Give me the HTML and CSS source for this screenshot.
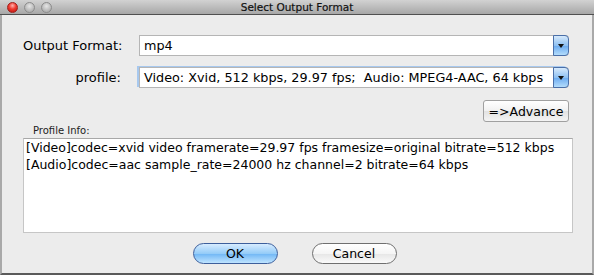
FILE: index.html
```html
<!DOCTYPE html>
<html lang="en">
<head>
    <meta charset="UTF-8">
    <title>Select Output Format</title>
    <link rel="stylesheet" href="styles.css">
</head>
<body>
    <div class="window">
        <div class="titlebar">
            <div class="lights">
                <span class="light close"></span>
                <span class="light"></span>
                <span class="light"></span>
            </div>
            <div class="title">Select Output Format</div>
        </div>

        <div class="content">
            <div class="row row-format">
                <label class="label">Output Format:</label>
                <div class="combo">
                    <span class="combo-text">mp4</span>
                    <span class="combo-arrow"></span>
                </div>
            </div>

            <div class="row row-profile">
                <label class="label">profile:</label>
                <div class="combo focus">
                    <span class="combo-text">Video: Xvid, 512 kbps, 29.97 fps;&nbsp; Audio: MPEG4-AAC, 64 kbps</span>
                    <span class="combo-arrow"></span>
                </div>
            </div>

            <div class="row row-advance">
                <button class="btn advance">=&gt;Advance</button>
            </div>

            <div class="info">
                <div class="info-label">Profile Info:</div>
                <div class="info-box">
                    <div>[Video]codec=xvid video framerate=29.97 fps framesize=original bitrate=512 kbps</div>
                    <div>[Audio]codec=aac sample_rate=24000 hz channel=2 bitrate=64 kbps</div>
                </div>
            </div>

            <div class="actions">
                <button class="btn pill ok">OK</button>
                <button class="btn pill">Cancel</button>
            </div>
        </div>
    </div>
</body>
</html>
```

FILE: styles.css
```css
body {
    margin: 0;
    padding: 0;
    background-color: #ececec;
    font-family: "DejaVu Sans", "Liberation Sans", sans-serif;
    color: #000;
}

.window {
    width: 594px;
    height: 275px;
    box-sizing: border-box;
    display: flex;
    flex-direction: column;
    background-color: #ececec;
    border-left: 2px solid #a9a9a9;
    border-right: 2px solid #a9a9a9;
    border-bottom: 2px solid #5a5a5a;
}

.titlebar {
    height: 14px;
    flex: none;
    display: flex;
    align-items: center;
    position: relative;
    margin: 0 -2px;
    background: linear-gradient(#d2d2d2, #a7a7a7);
    border-bottom: 1px solid #505050;
}

.lights {
    display: flex;
    gap: 6px;
    padding-left: 7px;
}

.light {
    width: 11px;
    height: 11px;
    border-radius: 50%;
    box-sizing: border-box;
    border: 1px solid #8c8c8c;
    background: radial-gradient(circle at 50% 35%, #e6e6e6, #b3b3b3 70%);
}

.light.close {
    border-color: #a0201c;
    background: radial-gradient(circle at 50% 30%, #ffb3b0 0, #f03a30 45%, #b8100a 100%);
}

.title {
    position: absolute;
    left: 0;
    right: 0;
    text-align: center;
    font-size: 10.5px;
    color: #111;
    -webkit-text-stroke: 0.2px #111;
}

.content {
    flex: 1;
    display: flex;
    flex-direction: column;
    padding: 20px 19px 0 21px;
}

.row {
    display: flex;
    align-items: center;
    margin-right: 4px;
}

.row-profile {
    margin-top: 11px;
}

.label {
    flex: none;
    width: 98px;
    text-align: right;
    white-space: nowrap;
    font-size: 13px;
    margin-right: 18px;
}

.combo {
    flex: 1;
    min-width: 0;
    height: 21px;
    box-sizing: border-box;
    display: flex;
    align-items: center;
    background-color: #fff;
    border: 1px solid #b5b5b5;
    border-right: none;
    border-radius: 0 4px 4px 0;
    font-size: 12.8px;
}

.combo.focus {
    box-shadow: -2px -1px 0 0 #a7c8ee;
}

.combo-text {
    flex: 1;
    min-width: 0;
    padding-left: 4px;
    white-space: nowrap;
    overflow: hidden;
}

.combo-arrow {
    flex: none;
    width: 16px;
    height: 21px;
    box-sizing: border-box;
    margin-top: -1px;
    margin-bottom: -1px;
    border: 1px solid #4a6fa8;
    border-radius: 0 4px 4px 0;
    background: linear-gradient(#d6e9fb, #8ec0f2 50%, #6aaaf0 51%, #b3dcfb);
    display: flex;
    align-items: center;
    justify-content: center;
}

.combo-arrow::after {
    content: "";
    border-left: 3px solid transparent;
    border-right: 3px solid transparent;
    border-top: 4px solid #111;
}

.row-advance {
    justify-content: flex-end;
    margin-top: 12px;
}

.btn {
    font-family: "DejaVu Sans", "Liberation Sans", sans-serif;
    font-size: 12.5px;
    color: #000;
    cursor: pointer;
}

.advance {
    width: 86px;
    height: 22px;
    padding: 0;
    border: 1px solid #a0a0a0;
    border-radius: 3px;
    background: linear-gradient(#ffffff, #f1f1f1 50%, #e2e2e2 51%, #f4f4f4);
}

.info {
    margin-top: 2px;
}

.info-label {
    font-size: 10px;
    color: #222;
    padding-left: 10px;
    height: 13px;
    line-height: 13px;
}

.info-box {
    height: 95px;
    box-sizing: border-box;
    margin-top: 1px;
    background-color: #fff;
    border: 1px solid #c6c6c6;
    border-top-color: #a8a8a8;
    padding: 0 2px;
    font-size: 12.5px;
    line-height: 17px;
    white-space: nowrap;
}

.actions {
    display: flex;
    justify-content: center;
    gap: 34px;
    margin-top: 10px;
    padding-right: 7px;
}

.pill {
    width: 85px;
    height: 21px;
    padding: 0;
    border-radius: 11px;
    border: 1px solid #6f6f6f;
    background: linear-gradient(#ffffff, #f5f5f5 50%, #e6e6e6 51%, #fafafa);
}

.pill.ok {
    border-color: #3d5f9c;
    background: linear-gradient(#d7ecff, #95ccf8 50%, #6fb6f5 51%, #bfe4ff);
}
```
